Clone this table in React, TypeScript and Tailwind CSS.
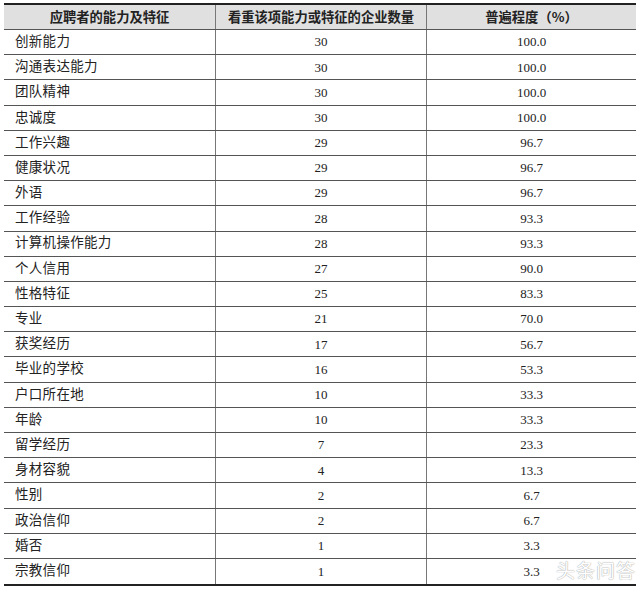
const ROWS: [string, number, string][] = [
  ["创新能力", 30, "100.0"],
  ["沟通表达能力", 30, "100.0"],
  ["团队精神", 30, "100.0"],
  ["忠诚度", 30, "100.0"],
  ["工作兴趣", 29, "96.7"],
  ["健康状况", 29, "96.7"],
  ["外语", 29, "96.7"],
  ["工作经验", 28, "93.3"],
  ["计算机操作能力", 28, "93.3"],
  ["个人信用", 27, "90.0"],
  ["性格特征", 25, "83.3"],
  ["专业", 21, "70.0"],
  ["获奖经历", 17, "56.7"],
  ["毕业的学校", 16, "53.3"],
  ["户口所在地", 10, "33.3"],
  ["年龄", 10, "33.3"],
  ["留学经历", 7, "23.3"],
  ["身材容貌", 4, "13.3"],
  ["性别", 2, "6.7"],
  ["政治信仰", 2, "6.7"],
  ["婚否", 1, "3.3"],
  ["宗教信仰", 1, "3.3"],
];

const serif = { fontFamily: '"Liberation Serif", "Noto Sans CJK SC", serif' };

export default function App() {
  return (
    <div className="w-[640px] h-[590px] bg-white relative pt-[3px] pl-[4px]">
      <div className="w-[632px] border-t-2 border-b-2 border-[#222]">
        <div
          className="grid grid-cols-[212px_211px_209px] h-[25px] bg-[#e0e0e0] border-b border-[#555] text-[13.3px] font-bold text-[#222]"
          style={{ fontFamily: '"Noto Sans CJK SC", sans-serif' }}
        >
          <div className="flex items-center justify-center border-r border-[#777]">应聘者的能力及特征</div>
          <div className="flex items-center justify-center border-r border-[#777]">看重该项能力或特征的企业数量</div>
          <div className="flex items-center justify-center">普遍程度（%）</div>
        </div>
        {ROWS.map(([name, count, pct], i) => (
          <div
            key={name}
            className={`grid grid-cols-[212px_211px_209px] h-[25.2px] text-[13.5px] text-[#222] ${
              i < ROWS.length - 1 ? "border-b border-[#555]" : ""
            }`}
            style={serif}
          >
            <div className="flex items-center pl-[11px] border-r border-[#777] tracking-[0.3px]">{name}</div>
            <div className="flex items-center justify-center border-r border-[#777] text-[13px]">{count}</div>
            <div className="flex items-center justify-center text-[13px]">{pct}</div>
          </div>
        ))}
      </div>
      <div
        className="absolute left-[556px] top-[556px] text-[19px] text-white tracking-[1px]"
        style={{ fontFamily: '"Noto Sans CJK SC", sans-serif', textShadow: "0 0 1px #aaa, 0 0 1px #aaa" }}
      >
        头条问答
      </div>
    </div>
  );
}
